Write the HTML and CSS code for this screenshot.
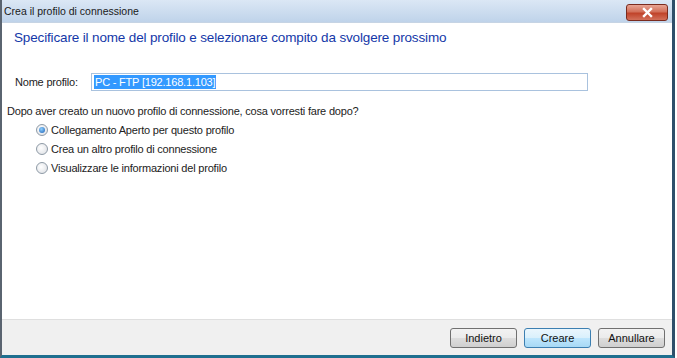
FILE: index.html
```html
<!DOCTYPE html>
<html lang="it">
<head>
  <meta charset="UTF-8" />
  <title>Crea il profilo di connessione</title>
  <link rel="stylesheet" href="styles.css">
</head>
<body>
  <div class="window">
    <div class="titlebar">
      <span class="title">Crea il profilo di connessione</span>
      <button class="close" aria-label="Chiudi">
        <svg width="13" height="11" viewBox="0 0 13 11">
          <path d="M3 2 L10 9 M10 2 L3 9" stroke="#fff" stroke-width="2.4" stroke-linecap="square" />
        </svg>
      </button>
    </div>

    <div class="content">
      <h1>Specificare il nome del profilo e selezionare compito da svolgere prossimo</h1>

      <div class="name-row">
        <label for="profile-name">Nome profilo:</label>
        <div class="name-input"><span class="sel">PC - FTP [192.168.1.103]</span></div>
      </div>

      <p class="question">Dopo aver creato un nuovo profilo di connessione, cosa vorresti fare dopo?</p>

      <div class="options">
        <label class="option"><span class="radio checked"></span>Collegamento Aperto per questo profilo</label>
        <label class="option"><span class="radio"></span>Crea un altro profilo di connessione</label>
        <label class="option"><span class="radio"></span>Visualizzare le informazioni del profilo</label>
      </div>
    </div>

    <div class="footer">
      <button class="btn">Indietro</button>
      <button class="btn default">Creare</button>
      <button class="btn">Annullare</button>
    </div>
  </div>
</body>
</html>
```

FILE: styles.css
```css
body {
  margin: 0;
  font-family: "Liberation Sans", Arial, sans-serif;
  background: #fff;
}

.window {
  width: 675px;
  height: 358px;
  box-sizing: border-box;
  border-left: 2px solid #5a6470;
  border-right: 3px solid #2f4f6a;
  border-bottom: 3px solid #1f6f8f;
  display: flex;
  flex-direction: column;
  background: #fff;
}

.titlebar {
  height: 22px;
  flex-shrink: 0;
  display: flex;
  align-items: center;
  justify-content: space-between;
  padding: 0 4px 0 2px;
  background: linear-gradient(to bottom, #dbe7f5, #bfd3ea);
  border-bottom: 1px solid #c6d4e4;
}

.title {
  font-size: 10.5px;
  color: #1a1a1a;
}

.close {
  width: 42px;
  height: 17px;
  margin-top: 2px;
  border: 1px solid #7a2b1e;
  border-radius: 3px;
  background: linear-gradient(to bottom, #e8a493 0%, #d2705a 45%, #c0432a 55%, #d2705a 100%);
  display: flex;
  align-items: center;
  justify-content: center;
  padding: 0;
}

.content {
  flex-grow: 1;
  padding: 7px 12px 0 3px;
  font-size: 11px;
  letter-spacing: -0.2px;
  color: #222;
}

h1 {
  margin: 0 0 0 9px;
  font-size: 13.5px;
  letter-spacing: -0.15px;
  font-weight: normal;
  color: #1438a8;
}

.name-row {
  display: flex;
  align-items: center;
  margin-top: 28px;
}

.name-row label {
  width: 76px;
  padding-left: 10px;
}

.name-input {
  width: 491px;
  height: 14px;
  border: 1px solid #a9c2de;
  padding: 1px 2px;
  display: flex;
  align-items: center;
}

.sel {
  background: #3399ff;
  color: #fff;
  line-height: 14px;
  padding: 0 1px;
}

.question {
  margin: 14px 0 0 2px;
}

.options {
  display: flex;
  flex-direction: column;
  gap: 5px;
  margin: 6px 0 0 31px;
}

.option {
  display: flex;
  align-items: center;
  height: 14px;
}

.radio {
  width: 12px;
  height: 12px;
  border-radius: 50%;
  border: 1px solid #8e9aa6;
  background: radial-gradient(circle at 40% 40%, #fff, #dadde2);
  box-sizing: border-box;
  margin-right: 3px;
  position: relative;
}

.radio.checked::after {
  content: "";
  position: absolute;
  left: 2px;
  top: 2px;
  width: 6px;
  height: 6px;
  border-radius: 50%;
  background: radial-gradient(circle at 40% 35%, #8fd0ff, #1a5fb4);
}

.footer {
  height: 35px;
  flex-shrink: 0;
  background: #f0f0f0;
  border-top: 1px solid #dfdfdf;
  display: flex;
  justify-content: flex-end;
  align-items: center;
  gap: 7px;
  padding-right: 7px;
}

.btn {
  width: 67px;
  height: 20px;
  font-family: "Liberation Sans", Arial, sans-serif;
  font-size: 11px;
  color: #111;
  border: 1px solid #707070;
  border-radius: 3px;
  background: linear-gradient(to bottom, #f2f2f2 0%, #ebebeb 50%, #dddddd 51%, #cfcfcf 100%);
  padding: 0;
}

.btn.default {
  border-color: #3c7fb1;
  background: linear-gradient(to bottom, #eaf6fd 0%, #d9f0fc 50%, #bee6fd 51%, #a7d9f5 100%);
}
```
